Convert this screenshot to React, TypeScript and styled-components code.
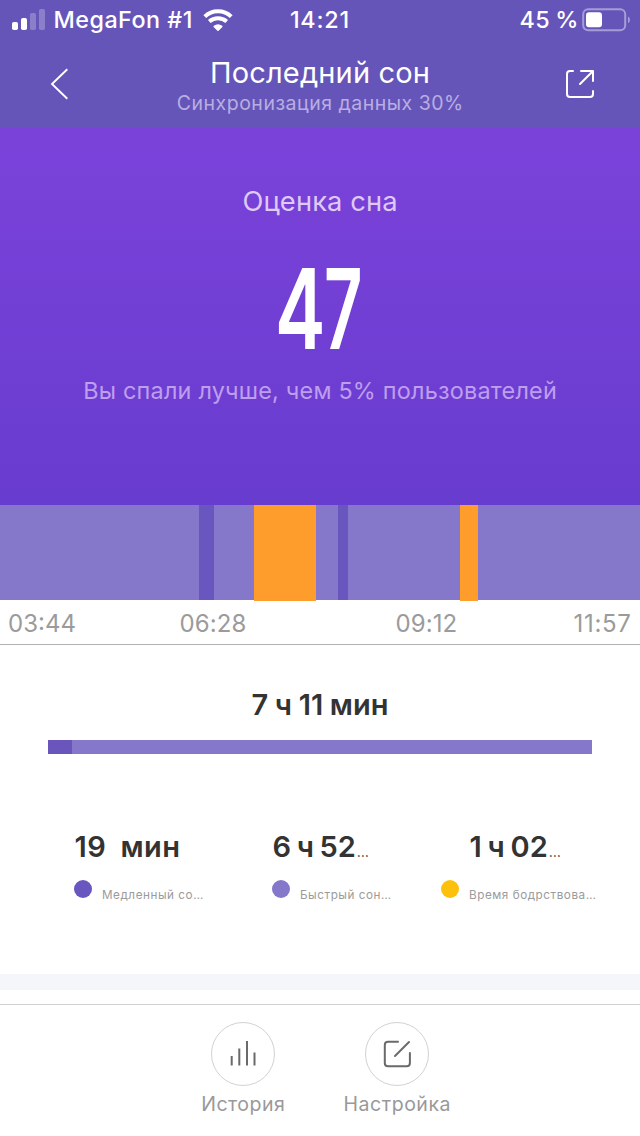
import React from 'react';
import styled, { createGlobalStyle } from 'styled-components';

const GlobalStyle = createGlobalStyle`
  * { box-sizing: border-box; }
  body { margin: 0; background: #fff; font-family: Inter, "Noto Sans", sans-serif; }
`;

const Screen = styled.div`
  width: 640px;
  height: 1136px;
  display: flex;
  flex-direction: column;
  background: #fff;
  overflow: hidden;
`;

const Text = styled.span<{ $size: number; $color: string; $track?: number; $weight?: number; $line?: number; $word?: number }>`
  display: block;
  white-space: pre;
  font-size: ${p => p.$size}px;
  line-height: ${p => p.$line ?? 30}px;
  font-weight: ${p => p.$weight ?? 400};
  color: ${p => p.$color};
  letter-spacing: ${p => p.$track ?? 0}px;
  margin-right: ${p => -(p.$track ?? 0)}px;
  word-spacing: ${p => p.$word ?? 0}px;
`;

const Top = styled.header`
  height: 128px;
  flex: none;
  background: #6655b9;
`;

const StatusBar = styled.div`
  height: 40px;
  display: grid;
  grid-template-columns: 1fr auto 1fr;
  align-items: center;
  padding: 0 9px 0 12px;
`;

const StatusGroup = styled.div<{ $end?: boolean; $gap: number }>`
  display: flex;
  align-items: center;
  gap: ${p => p.$gap}px;
  justify-content: ${p => (p.$end ? 'flex-end' : 'flex-start')};
`;

const Clock = styled.div`
  padding-right: 4px;
`;

const NavBar = styled.div`
  height: 88px;
  display: flex;
  justify-content: space-between;
  padding: 0 44px 0 50px;
`;

const NavButton = styled.button`
  display: block;
  width: 30px;
  height: 88px;
  padding: 0;
  border: 0;
  background: none;
  svg { display: block; }
`;

const Titles = styled.div`
  display: flex;
  flex-direction: column;
  align-items: center;
  padding: 18px 6px 0 0;
`;

const Hero = styled.section`
  height: 377px;
  flex: none;
  display: flex;
  flex-direction: column;
  align-items: center;
  padding-top: 59px;
  background: linear-gradient(#7b42da, #683ccf);
`;

const Score = styled.div`
  display: flex;
  height: 130px;
  margin: 27px 0 2px;
  font-size: 111.5px;
  line-height: 130px;
  font-weight: 600;
  color: #fff;
`;

const Digit = styled.span<{ $width: number; $squeeze: number }>`
  width: ${p => p.$width}px;
  transform: scaleX(${p => p.$squeeze});
  transform-origin: left;
`;

const Phases = styled.div`
  height: 95px;
  flex: none;
  display: flex;
  background: #8577c9;
`;

const Phase = styled.div<{ $width: number; $kind: 'light' | 'deep' | 'awake' }>`
  width: ${p => p.$width}px;
  height: ${p => (p.$kind === 'awake' ? 96 : 95)}px;
  background: ${p => ({ light: '#8577c9', deep: '#6956be', awake: '#ff9d2c' })[p.$kind]};
`;

const Times = styled.div`
  height: 45px;
  flex: none;
  display: flex;
  padding: 9px 0 0 8px;
  border-bottom: 1px solid #b2b2b2;
`;

const TimeSlot = styled.div<{ $width: number }>`
  width: ${p => p.$width}px;
  flex: none;
`;

const Summary = styled.section`
  height: 329px;
  flex: none;
  padding: 45px 48px 0;
`;

const Total = styled.div`
  display: flex;
  justify-content: center;
`;

const Track = styled.div`
  height: 14px;
  margin-top: 20px;
  display: flex;
  background: #8577c9;
`;

const TrackDeep = styled.div`
  width: 24px;
  background: #6955bb;
`;

const Stats = styled.div`
  display: flex;
  margin: 78px 0 0 26px;
`;

const Stat = styled.div<{ $width: number }>`
  width: ${p => p.$width}px;
  flex: none;
`;

const StatValue = styled.div<{ $indent: number }>`
  display: flex;
  padding-left: ${p => p.$indent}px;
`;

const Dots = styled.span`
  font-size: 14px;
  line-height: 40px;
  height: 30px;
  margin-left: 1px;
  color: #333;
`;

const Legend = styled.div`
  display: flex;
  align-items: flex-start;
  gap: 10px;
  margin-top: 18px;
`;

const Dot = styled.span<{ $color: string }>`
  width: 18px;
  height: 18px;
  flex: none;
  border-radius: 50%;
  background: ${p => p.$color};
`;

const LegendLabel = styled.div`
  padding-top: 5px;
`;

const Band = styled.div`
  height: 16px;
  flex: none;
  background: #f4f6f9;
`;

const TabBar = styled.nav`
  height: 132px;
  flex: none;
  margin-top: 14px;
  border-top: 1px solid #d0d0d0;
  display: flex;
  justify-content: center;
  padding-top: 17px;
`;

const Tab = styled.div`
  width: 154px;
  display: flex;
  flex-direction: column;
  align-items: center;
`;

const Ring = styled.div`
  width: 64px;
  height: 64px;
  border: 1px solid #d2d2d2;
  border-radius: 50%;
  margin-bottom: 3px;
  svg { display: block; margin: -1px; }
`;

const SignalIcon = () => (
  <svg width="34" height="24" viewBox="0 0 34 24" fill="#fff">
    <rect x="0" y="14" width="6" height="8" rx="1.8" />
    <rect x="9" y="10" width="6" height="12" rx="1.8" />
    <rect x="18" y="5" width="6" height="17" rx="1.8" opacity=".25" />
    <rect x="27" y="1" width="6" height="21" rx="1.8" opacity=".25" />
  </svg>
);

const WifiIcon = () => (
  <svg width="33" height="24" viewBox="-3 0 33 24" fill="none" stroke="#fff" strokeWidth="4">
    <path d="M1.8 8.7C9 1.5 21 1.5 28.2 8.7" />
    <path d="M6.3 13.5C11.2 9.2 18.8 9.2 23.7 13.5" />
    <path d="M15.6 22.8Q15 23.4 14.4 22.8L10.6 18.9Q10.2 18.2 10.8 17.8Q15 14.8 19.2 17.8Q19.8 18.2 19.4 18.9Z" fill="#fff" stroke="none" />
  </svg>
);

const BatteryIcon = () => (
  <svg width="49" height="24" viewBox="0 0 49 24">
    <rect x="1.2" y="1.2" width="42" height="21" rx="5" fill="none" stroke="#fff" strokeOpacity=".42" strokeWidth="2" />
    <rect x="4" y="4.2" width="16" height="15" rx="3" fill="#fff" />
    <path d="M46 8.5Q48 9.5 48 11.8T46 15.2Z" fill="#fff" fillOpacity=".42" />
  </svg>
);

const BackIcon = () => (
  <svg width="30" height="88" viewBox="50 40 30 88" fill="none" stroke="#fff" strokeWidth="1.9">
    <path d="M67.3 69.3L52 84L67.3 98.7" />
  </svg>
);

const ShareIcon = () => (
  <svg width="30" height="88" viewBox="566 40 30 88" fill="none" stroke="#fff" strokeWidth="2" strokeLinecap="round" strokeLinejoin="round">
    <path d="M573 71H570Q567 71 567 74V94Q567 97 570 97H590Q593 97 593 94V91" />
    <path d="M581 71H593V81M593 71L580 84" />
  </svg>
);

const HistoryIcon = () => (
  <svg width="64" height="64" viewBox="0 0 64 64" fill="none" stroke="#6a6a6a" strokeWidth="2">
    <path d="M20.7 34V43.4M28.3 26.5V43.4M36 19V43.4M43.5 30.4V43.4" />
  </svg>
);

const SettingsIcon = () => (
  <svg width="64" height="64" viewBox="0 0 64 64" fill="none" stroke="#6a6a6a" strokeWidth="2" strokeLinecap="round">
    <path d="M33 19.7H23Q19.8 19.7 19.8 23V41Q19.8 44.3 23 44.3H41.7Q44.9 44.3 44.9 41V31" />
    <path d="M44 20L30 34" />
  </svg>
);

const phases: [number, 'light' | 'deep' | 'awake'][] = [
  [199, 'light'], [15, 'deep'], [40, 'light'], [62, 'awake'], [22, 'light'],
  [10, 'deep'], [112, 'light'], [18, 'awake'], [162, 'light'],
];

const times: [string, number, number][] = [
  ['03:44', 171.5, 0], ['06:28', 216, 0.1], ['09:12', 178, 0.1], ['11:57', 67, 0.7],
];

const stats = [
  { value: '19  мин', word: -0.5, track: 0.4, cut: false, label: 'Медленный со…', color: '#6956be', width: 198, indent: 0.5 },
  { value: '6 ч 52', word: -1.7, track: 0, cut: true, label: 'Быстрый сон…', color: '#8577c9', width: 169, indent: 0.5 },
  { value: '1 ч 02', word: -1.5, track: 0, cut: true, label: 'Время бодрствова…', color: '#fdc10d', width: 160, indent: 28.5 },
];

export default function App() {
  return (
    <Screen>
      <GlobalStyle />
      <Top>
        <StatusBar>
          <StatusGroup $gap={7.5}>
            <SignalIcon />
            <Text $size={23.3} $color="#fff" $weight={500} $track={0.5}>MegaFon #1</Text>
            <WifiIcon />
          </StatusGroup>
          <Clock>
            <Text $size={23.3} $color="#fff" $weight={500} $track={0.8}>14:21</Text>
          </Clock>
          <StatusGroup $end $gap={3.5}>
            <Text $size={23.3} $color="#fff" $weight={500} $track={0.3} $word={-1}>45 %</Text>
            <BatteryIcon />
          </StatusGroup>
        </StatusBar>
        <NavBar>
          <NavButton aria-label="Назад"><BackIcon /></NavButton>
          <Titles>
            <Text $size={29} $color="#fff" $track={0.15}>Последний сон</Text>
            <Text $size={19.5} $color="#b8aee2" $track={0.5}>Синхронизация данных 30%</Text>
          </Titles>
          <NavButton aria-label="Поделиться"><ShareIcon /></NavButton>
        </NavBar>
      </Top>
      <Hero>
        <Text $size={27.3} $color="#dfc9f7" $track={0.1}>Оценка сна</Text>
        <Score>
          <Digit $width={48.8} $squeeze={0.68}>4</Digit>
          <Digit $width={41.2} $squeeze={0.6}>7</Digit>
        </Score>
        <Text $size={23.4} $color="#be9fee" $track={0.22}>Вы спали лучше, чем 5% пользователей</Text>
      </Hero>
      <Phases>
        {phases.map(([w, kind], i) => <Phase key={i} $width={w} $kind={kind} />)}
      </Phases>
      <Times>
        {times.map(([t, w, track]) => (
          <TimeSlot key={t} $width={w}><Text $size={24} $color="#9b9b9b" $track={track}>{t}</Text></TimeSlot>
        ))}
      </Times>
      <Summary>
        <Total>
          <Text $size={29} $color="#333" $weight={600} $word={-0.7}>7 ч 11 мин</Text>
        </Total>
        <Track><TrackDeep /></Track>
        <Stats>
          {stats.map(s => (
            <Stat key={s.label} $width={s.width}>
              <StatValue $indent={s.indent}>
                <Text $size={29} $color="#333" $weight={600} $track={s.track} $word={s.word}>{s.value}</Text>
                {s.cut && <Dots>…</Dots>}
              </StatValue>
              <Legend>
                <Dot $color={s.color} />
                <LegendLabel>
                  <Text $size={11.7} $color="#9b9b9b" $track={0.55} $line={20}>{s.label}</Text>
                </LegendLabel>
              </Legend>
            </Stat>
          ))}
        </Stats>
      </Summary>
      <Band />
      <TabBar>
        <Tab>
          <Ring><HistoryIcon /></Ring>
          <Text $size={19.5} $color="#999" $track={0.5}>История</Text>
        </Tab>
        <Tab>
          <Ring><SettingsIcon /></Ring>
          <Text $size={19.5} $color="#999" $track={0.55}>Настройка</Text>
        </Tab>
      </TabBar>
    </Screen>
  );
}
